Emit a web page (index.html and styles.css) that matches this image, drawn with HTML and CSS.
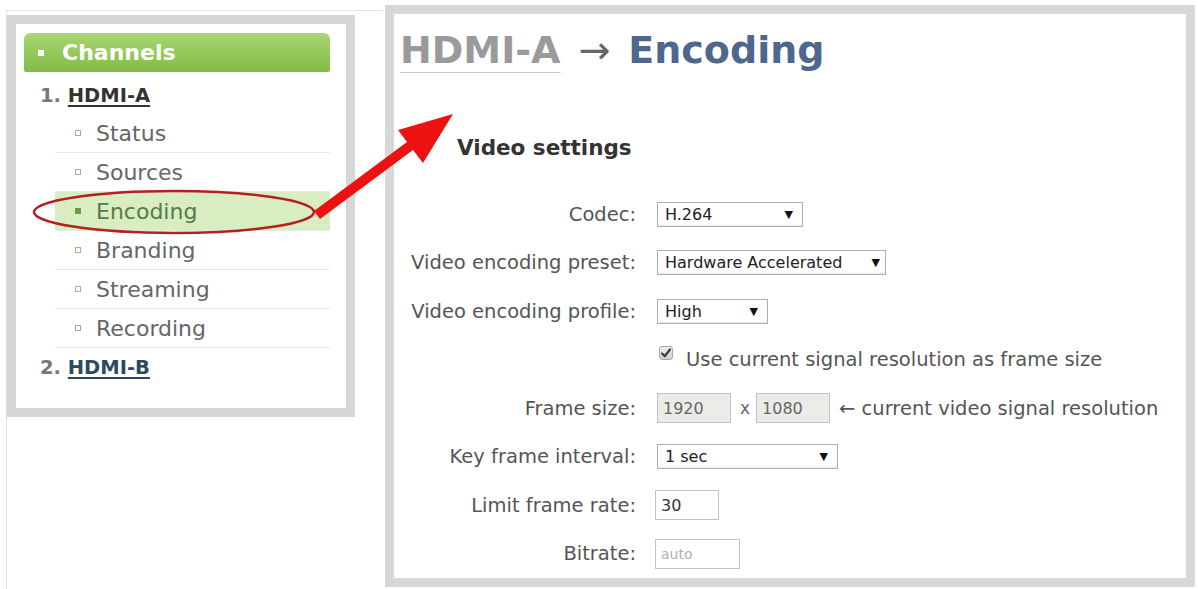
FILE: index.html
```html
<!DOCTYPE html>
<html lang="en">
<head>
    <meta charset="UTF-8">
    <title>HDMI-A Encoding</title>
    <link rel="stylesheet" href="styles.css">
</head>
<body>
    <div class="page">
        <div class="side-frame">
            <nav class="side">
                <div class="side-head"><span class="head-dot"></span>Channels</div>
                <div class="chan"><span class="num">1.</span> <a href="#">HDMI-A</a></div>
                <ul class="menu">
                    <li><span class="dot"></span>Status</li>
                    <li><span class="dot"></span>Sources</li>
                    <li class="active"><span class="dot"></span>Encoding</li>
                    <li><span class="dot"></span>Branding</li>
                    <li><span class="dot"></span>Streaming</li>
                    <li><span class="dot"></span>Recording</li>
                </ul>
                <div class="chan chan-b"><span class="num">2.</span> <a href="#">HDMI-B</a></div>
            </nav>
        </div>

        <main class="content">
            <h1 class="title"><a href="#">HDMI-A</a><span class="arrow">&rarr;</span>Encoding</h1>
            <h2 class="section">Video settings</h2>

            <div class="form">
                <label>Codec:</label>
                <div class="select w-codec"><span>H.264</span><span class="caret">&#9660;</span></div>

                <label>Video encoding preset:</label>
                <div class="select w-preset"><span>Hardware Accelerated</span><span class="caret">&#9660;</span></div>

                <label>Video encoding profile:</label>
                <div class="select w-profile"><span>High</span><span class="caret">&#9660;</span></div>

                <span></span>
                <div class="check-row">
                    <span class="check">
                        <svg width="12" height="12" viewBox="0 0 12 12"><path d="M2 6.5 L4.8 9.2 L10 2.5" fill="none" stroke="#3a3a3a" stroke-width="2.2" stroke-linecap="round" stroke-linejoin="round"/></svg>
                    </span>
                    <span>Use current signal resolution as frame size</span>
                </div>

                <label>Frame size:</label>
                <div class="inline">
                    <span class="field disabled w-dim">1920</span>
                    <span class="times">x</span>
                    <span class="field disabled w-dim">1080</span>
                    <span class="note">&larr; current video signal resolution</span>
                </div>

                <label>Key frame interval:</label>
                <div class="select w-key"><span>1 sec</span><span class="caret">&#9660;</span></div>

                <label>Limit frame rate:</label>
                <div><span class="field w-rate">30</span></div>

                <label>Bitrate:</label>
                <div><span class="field w-bitrate placeholder">auto</span></div>
            </div>
        </main>
    </div>

    <!-- annotation drawn over the screenshot -->
    <svg class="markup" width="1198" height="589" viewBox="0 0 1198 589">
        <ellipse cx="174" cy="212" rx="140" ry="21" fill="none" stroke="#b51f1f" stroke-width="2.5"/>
        <polygon points="314,211 407,142 398,130 453,114 423,163 413,150 320,219" fill="#ee1111"/>
    </svg>
</body>
</html>
```

FILE: styles.css
```css
body {
    margin: 0;
    background: #fff;
    font-family: "DejaVu Sans", Verdana, sans-serif;
    color: #555;
}
.page {
    display: flex;
    align-items: flex-start;
    height: 589px;
    padding-left: 6px;
    overflow: hidden;
}

/* left menu */
.side-frame {
    width: 377px;
    height: 579px;
    margin-top: 10px;
    border-top: 1px solid #e2e2e2;
    border-left: 1px solid #e2e2e2;
    box-sizing: border-box;
    padding: 4px 0 0 0;
}
.side {
    width: 348px;
    height: 402px;
    box-sizing: border-box;
    border: 9px solid #d6d6d6;
    padding: 9px 16px 0 8px;
    background: #fff;
}
.side-head {
    height: 39px;
    display: flex;
    align-items: center;
    padding-left: 14px;
    border-radius: 6px 6px 2px 2px;
    background: linear-gradient(#a9d774, #82bb44);
    color: #fff;
    font-weight: bold;
    font-size: 22px;
}
.head-dot {
    width: 6px;
    height: 6px;
    background: #fff;
    margin-right: 18px;
}
.chan {
    height: 36px;
    line-height: 36px;
    padding: 6px 0 0 16px;
    font-size: 19.5px;
    font-weight: bold;
}
.chan .num {
    color: #777;
}
.chan a {
    color: #333;
    text-decoration: underline;
    text-decoration-thickness: 2px;
    text-underline-offset: 3px;
}
.chan-b {
    height: 40px;
    line-height: 40px;
    padding-top: 0;
}
.chan-b a {
    color: #2d4a5c;
}
.menu {
    list-style: none;
    margin: 0;
    padding: 0 0 0 31px;
}
.menu li {
    height: 38px;
    display: flex;
    align-items: center;
    border-bottom: 1px solid #e8e8e8;
    font-size: 22px;
    color: #666;
}
.menu .dot {
    width: 4px;
    height: 4px;
    border: 1.5px solid #a3b485;
    margin: 0 15px 0 20px;
}
.menu li.active {
    background: #d9edc2;
    color: #587a44;
}
.menu li.active .dot {
    background: #6c9c42;
    border-color: #6c9c42;
}

/* main panel */
.content {
    width: 810px;
    height: 582px;
    margin: 5px 0 0 2px;
    box-sizing: border-box;
    border: 9px solid #d8d8d8;
    padding: 14px 0 0 6px;
}
.title {
    margin: 0;
    font-size: 38px;
    line-height: 44px;
    font-weight: bold;
    color: #4d678d;
}
.title a {
    color: #9a9a9a;
    text-decoration: underline;
    text-decoration-color: #c8c8c8;
    text-decoration-thickness: 1px;
    text-underline-offset: 9px;
}
.title .arrow {
    color: #666;
    font-weight: normal;
    margin: 0 18px 0 18px;
}
.section {
    margin: 64px 0 0 57px;
    font-size: 21.5px;
    line-height: 23px;
    color: #333;
}
.form {
    display: grid;
    grid-template-columns: 236px auto;
    grid-auto-rows: 48.5px;
    column-gap: 21px;
    align-items: center;
    margin-top: 31px;
    font-size: 19.5px;
}
.form label {
    text-align: right;
    color: #555;
}
.select {
    height: 25px;
    box-sizing: border-box;
    border: 1px solid #b0b0b0;
    box-shadow: inset 0 -1px 2px #e6e6e6;
    background: #fff;
    display: flex;
    align-items: center;
    justify-content: space-between;
    padding: 0 9px 0 7px;
    font-size: 16px;
    color: #222;
}
.caret {
    font-size: 11px;
    color: #111;
}
.w-codec { width: 146px; }
.w-preset { width: 229px; padding-right: 5px; }
.w-profile { width: 111px; }
.w-key { width: 181px; }
.check-row {
    display: flex;
    align-items: center;
    color: #555;
}
.check {
    width: 14px;
    height: 14px;
    box-sizing: border-box;
    border: 1px solid #aaa;
    border-radius: 3px;
    background: linear-gradient(#eee, #cfcfcf);
    display: flex;
    align-items: center;
    justify-content: center;
    margin: 0 13px 13px 2px;
}
.inline {
    display: flex;
    align-items: center;
}
.field {
    display: inline-flex;
    align-items: center;
    height: 30px;
    box-sizing: border-box;
    border: 1px solid #c2c2c2;
    padding-left: 5px;
    font-size: 16px;
    color: #333;
    background: #fff;
}
.field.disabled {
    background: #ebebe8;
    color: #666;
}
.field.placeholder {
    color: #b0b0b0;
    font-size: 14px;
}
.w-dim { width: 74px; }
.w-rate { width: 64px; margin-left: -2px; }
.w-bitrate { width: 85px; margin-left: -2px; }
.times {
    margin: 0 6px 0 9px;
    font-size: 17px;
    color: #666;
}
.note {
    margin-left: 9px;
    color: #555;
}

.markup {
    position: absolute;
    top: 0;
    left: 0;
    pointer-events: none;
}
```
